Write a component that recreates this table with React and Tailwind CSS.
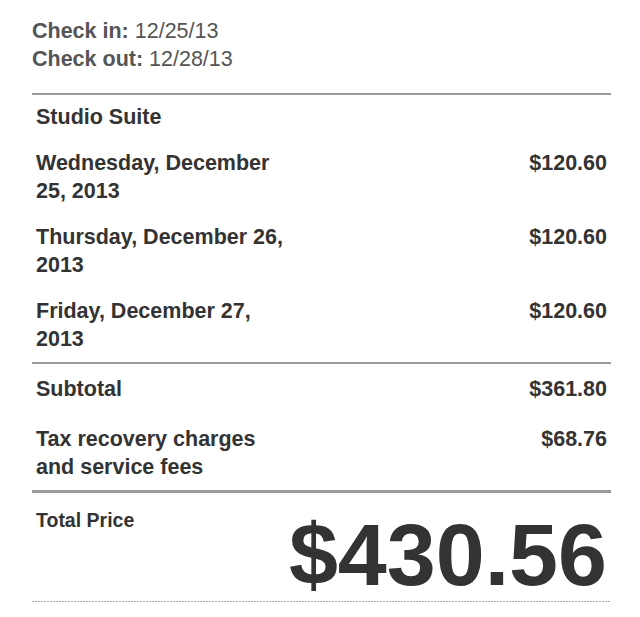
const nights = [
  { date: "Wednesday, December 25, 2013", price: "$120.60" },
  { date: "Thursday, December 26, 2013", price: "$120.60" },
  { date: "Friday, December 27, 2013", price: "$120.60" },
];

const Row = ({ label, amount }) => (
  <div className="flex items-start justify-between">
    <div className="w-[255px] font-bold">{label}</div>
    <div className="font-bold">{amount}</div>
  </div>
);

const App = () => {
  return (
    <div className="min-h-screen bg-white pl-[32px] pr-[29px] pt-[17px] font-['Liberation_Sans',Arial,sans-serif] text-[21.5px] leading-[28px] text-[#333]">
      <div className="text-[#555]">
        <div>
          <span className="font-bold">Check in:</span> 12/25/13
        </div>
        <div>
          <span className="font-bold">Check out:</span> 12/28/13
        </div>
      </div>

      <div className="mt-[20px] border-t-2 border-[#9a9a9a]">
        <div className="flex flex-col gap-[18px] px-[4px] pb-[9px] pt-[8px]">
          <div className="font-bold">Studio Suite</div>
          {nights.map((n) => (
            <Row key={n.date} label={n.date} amount={n.price} />
          ))}
        </div>
      </div>

      <div className="border-t-2 border-[#9a9a9a]">
        <div className="flex flex-col gap-[22px] px-[4px] pb-[9px] pt-[11px]">
          <Row label="Subtotal" amount="$361.80" />
          <Row label="Tax recovery charges and service fees" amount="$68.76" />
        </div>
      </div>

      <div className="border-t-[3px] border-[#9a9a9a]">
        <div className="flex items-start justify-between px-[4px] pt-[13px]">
          <div className="text-[19.5px] font-bold">Total Price</div>
          <div className="mb-[2px] mt-[5px] text-[88px] font-bold leading-none">$430.56</div>
        </div>
        <div className="h-px bg-[linear-gradient(to_right,#aaa_67%,transparent_0)] bg-[length:3px_1px] bg-repeat-x" />
      </div>
    </div>
  );
};

export default App;
